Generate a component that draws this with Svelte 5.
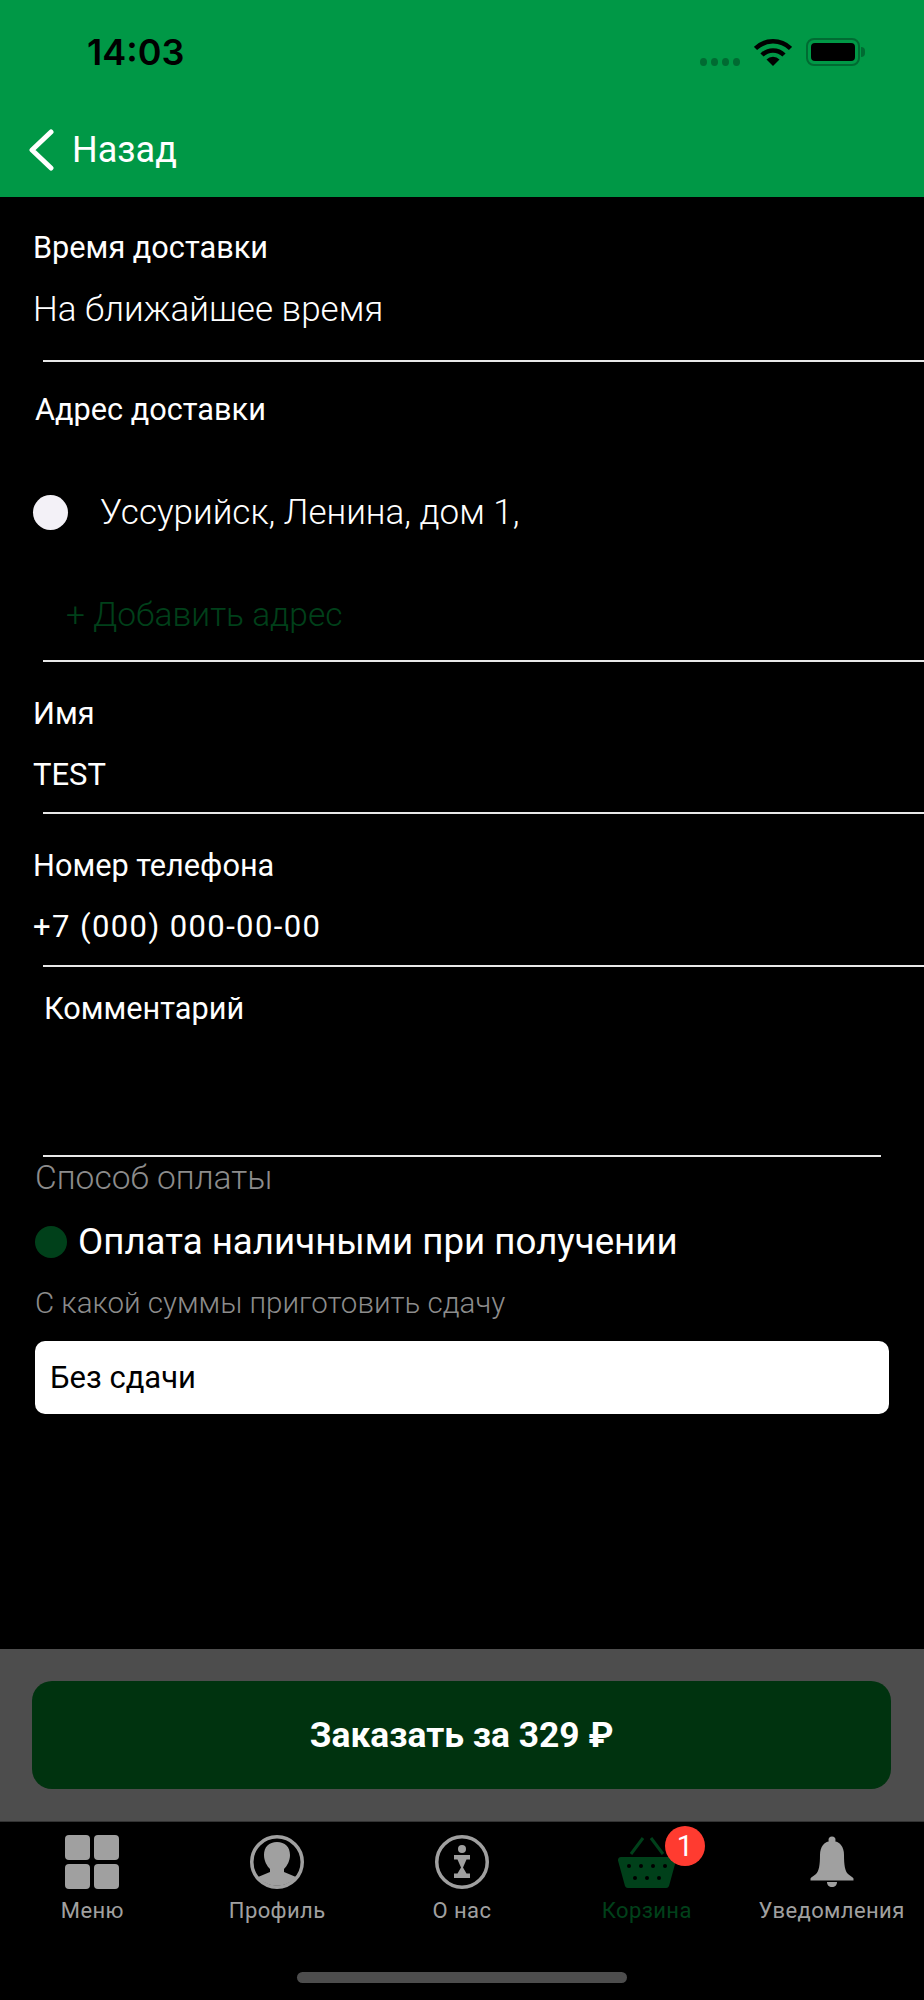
<script lang="ts">
  const fields = [
    { label: 'Имя', value: 'TEST', wide: false },
    { label: 'Номер телефона', value: '+7 (000) 000-00-00', wide: true },
  ];

  const tabs = [
    { id: 'menu', label: 'Меню' },
    { id: 'profile', label: 'Профиль' },
    { id: 'about', label: 'О нас' },
    { id: 'cart', label: 'Корзина', badge: 1 },
    { id: 'bell', label: 'Уведомления' },
  ];
  const holes = [[11, 31], [23, 31], [35, 31], [47, 31], [17, 43], [29, 43], [41, 43]];
</script>

<div class="page">
  <header class="top">
    <div class="status">
      <span class="time">14:03</span>
      <div class="status-icons">
        <span class="dots"><i></i><i></i><i></i><i></i></span>
        <svg class="wifi" viewBox="0 0 38 28" aria-hidden="true">
          <path d="M1.500 10.500a25 25 0 0 1 35 0" fill="none" stroke="#000" stroke-width="4.500"/>
          <path d="M8 17a15.500 15.500 0 0 1 22 0" fill="none" stroke="#000" stroke-width="4.500"/>
          <path d="M12.500 21.500a9 9 0 0 1 13 0L19 28z" fill="#000"/>
        </svg>
        <span class="battery"><span></span></span>
      </div>
    </div>
    <div class="back">
      <svg class="chevron" viewBox="0 0 26 42" aria-hidden="true">
        <path d="M23 3 4 21l19 18" fill="none" stroke="#fff" stroke-width="5" stroke-linecap="round" stroke-linejoin="round"/>
      </svg>
      <span>Назад</span>
    </div>
  </header>

  <main class="form">
    <section class="block first">
      <div class="label">Время доставки</div>
      <div class="value">На ближайшее время</div>
    </section>

    <section class="block address">
      <div class="label addr-label">Адрес доставки</div>
      <div class="addr-row">
        <span class="dot light"></span>
        <span class="addr-text">Уссурийск, Ленина, дом 1,</span>
      </div>
      <div class="add">+ Добавить адрес</div>
    </section>

    {#each fields as f}
      <section class="block field">
        <div class="label">{f.label}</div>
        <div class="value small" class:wide={f.wide}>{f.value}</div>
      </section>
    {/each}

    <section class="comment">
      <div class="label">Комментарий</div>
    </section>

    <section class="pay">
      <div class="muted big">Способ оплаты</div>
      <div class="pay-row">
        <span class="dot green"></span>
        <span>Оплата наличными при получении</span>
      </div>
      <div class="muted">С какой суммы приготовить сдачу</div>
      <div class="change">Без сдачи</div>
    </section>
  </main>

  <div class="order">
    <button class="order-btn">Заказать за 329 ₽</button>
  </div>

  <nav class="tabs">
    {#each tabs as t}
      <div class="tab" class:active={t.id === 'cart'}>
        <div class="tab-icon">
          {#if t.id === 'menu'}
            <svg viewBox="0 0 54 54" aria-hidden="true">
              <rect x="0" y="0" width="25" height="25" rx="4"/>
              <rect x="29" y="0" width="25" height="25" rx="4"/>
              <rect x="0" y="29" width="25" height="25" rx="4"/>
              <rect x="29" y="29" width="25" height="25" rx="4"/>
            </svg>
          {:else if t.id === 'profile'}
            <svg viewBox="0 0 54 54" aria-hidden="true">
              <circle cx="27" cy="27" r="25.250" fill="none" stroke="currentColor" stroke-width="3.500"/>
              <path d="M27 7c-8 0-13 5-13 13 0 6 3 11 6 14v3L8 42a25 25 0 0 0 38 0l-12-5v-3c3-3 6-8 6-14 0-8-5-13-13-13z"/>
            </svg>
          {:else if t.id === 'about'}
            <svg viewBox="0 0 54 54" aria-hidden="true">
              <circle cx="27" cy="27" r="25.250" fill="none" stroke="currentColor" stroke-width="3.500"/>
              <circle cx="27" cy="14" r="4"/>
              <path d="M19 20h16v4.500h-3.500L28 32.500l3.500 6H35V43H19v-4.500h3.500l3.500-6-3.500-8H19z"/>
            </svg>
          {:else if t.id === 'cart'}
            <svg class="basket" viewBox="0 0 58 54" aria-hidden="true">
              <path d="M13 19 25 3M45 19 33 3" fill="none" stroke="currentColor" stroke-width="3"/>
              <path d="M3 22h52a3 3 0 0 1 3 3.500l-7 25.500a3 3 0 0 1-3 2H10a3 3 0 0 1-3-2L0 25.500A3 3 0 0 1 3 22z"/>
              {#each holes as h}
                <circle cx={h[0]} cy={h[1]} r="2" fill="#000"/>
              {/each}
            </svg>
            <span class="badge">{t.badge}</span>
          {:else}
            <svg viewBox="0 0 54 54" aria-hidden="true">
              <circle cx="27" cy="5" r="3.500"/>
              <path d="M27 6c-8 0-12 6-12 14 0 10-1 16-4 19-2 2-5 3-5.500 4.500v2h43v-2C48 42 45 41 43 39c-3-3-4-9-4-19 0-8-4-14-12-14z"/>
              <path d="M22 47h10c0 3-2 5-5 5s-5-2-5-5z"/>
            </svg>
          {/if}
        </div>
        <span class="tab-label">{t.label}</span>
      </div>
    {/each}
  </nav>
  <div class="home"><span></span></div>
</div>

<style>
  :global(body) {
    margin: 0;
    background: #000;
  }

  .page {
    width: 924px;
    height: 2000px;
    display: flex;
    flex-direction: column;
    background: #000;
    color: #fff;
    font-family: Roboto, "Liberation Sans", sans-serif;
    overflow: hidden;
  }

  .top {
    height: 197px;
    flex-shrink: 0;
    background: #009846;
    box-sizing: border-box;
  }

  .status {
    height: 104px;
    display: flex;
    justify-content: space-between;
    align-items: center;
    padding: 0 64px 0 87px;
  }

  .time {
    font-family: Inter, "Liberation Sans", sans-serif;
    font-size: 36px;
    font-weight: 600;
    color: #000;
  }

  .status-icons {
    display: flex;
    align-items: center;
    gap: 14px;
  }

  .dots {
    display: flex;
    gap: 4px;
    margin-top: 20px;
  }

  .dots i {
    width: 7px;
    height: 8px;
    border-radius: 50%;
    background: #006b32;
  }

  .wifi {
    width: 38px;
    height: 28px;
  }

  .battery {
    width: 54px;
    height: 28px;
    box-sizing: border-box;
    border: 2px solid #006b32;
    border-radius: 8px;
    padding: 3px;
    display: flex;
    position: relative;
  }

  .battery::after {
    content: "";
    position: absolute;
    right: -7px;
    top: 7px;
    width: 4px;
    height: 10px;
    border-radius: 0 4px 4px 0;
    background: #006b32;
  }

  .battery span {
    flex: 1;
    background: #000;
    border-radius: 4px;
  }

  .back {
    display: flex;
    align-items: center;
    gap: 18px;
    padding-left: 28px;
    margin-top: 25px;
    font-size: 36px;
  }

  .chevron {
    width: 26px;
    height: 42px;
  }

  .form {
    flex: 1;
    font-weight: 300;
  }

  .label {
    font-size: 30.700px;
    font-weight: 400;
    line-height: 34px;
  }

  .value {
    font-size: 35px;
    line-height: 40px;
  }

  .value.small {
    font-size: 31px;
    font-weight: 400;
  }

  .value.wide {
    letter-spacing: 1.400px;
  }

  .block {
    padding-left: 33px;
    box-sizing: border-box;
    position: relative;
  }

  .block::after,
  .comment::after {
    content: "";
    position: absolute;
    left: 43px;
    right: 0;
    bottom: 0;
    height: 2px;
    background: #e8e8e8;
  }

  .first {
    height: 165px;
    padding-top: 34px;
  }

  .first .value {
    margin-top: 25px;
  }

  .address {
    height: 300px;
    padding-top: 31px;
  }

  .addr-label {
    margin-left: 2px;
  }

  .addr-row {
    display: flex;
    align-items: center;
    gap: 32px;
    margin-top: 65px;
    font-size: 35px;
  }

  .dot {
    width: 35px;
    height: 35px;
    border-radius: 50%;
    flex-shrink: 0;
  }

  .dot.light {
    background: #f3f1f7;
  }

  .add {
    margin: 62px 0 0 33px;
    font-size: 33.500px;
    line-height: 40px;
    color: #00401a;
  }

  .field {
    height: 152px;
    padding-top: 35px;
  }

  .field + .field {
    height: 153px;
  }

  .field .value {
    margin-top: 24px;
  }

  .comment {
    height: 190px;
    padding: 25px 0 0 44px;
    box-sizing: border-box;
    position: relative;
  }

  .comment::after {
    right: 43px;
  }

  .pay {
    padding: 4px 35px 0;
  }

  .muted {
    font-size: 29.500px;
    line-height: 34px;
    color: #8c8c8c;
  }

  .muted.big {
    font-size: 33.500px;
  }

  .pay-row {
    display: flex;
    align-items: center;
    gap: 11px;
    margin-top: 25px;
    font-size: 36.700px;
    font-weight: 400;
    line-height: 44px;
  }

  .dot.green {
    width: 32px;
    height: 32px;
    background: #00401a;
  }

  .pay-row + .muted {
    margin-top: 22px;
  }

  .change {
    height: 73px;
    margin-top: 21px;
    padding-left: 15px;
    display: flex;
    align-items: center;
    background: #fff;
    border-radius: 10px;
    color: #000;
    font-size: 31px;
    font-weight: 400;
  }

  .order {
    height: 172px;
    flex-shrink: 0;
    box-sizing: border-box;
    background: #4d4d4d;
    padding: 32px 33px 31px 32px;
  }

  .order-btn {
    display: block;
    width: 100%;
    height: 108px;
    border: none;
    border-radius: 20px;
    background: #00330f;
    color: #fff;
    font-family: inherit;
    font-size: 35.400px;
    font-weight: 700;
  }

  .tabs {
    display: grid;
    grid-template-columns: repeat(5, 1fr);
    flex-shrink: 0;
    padding-top: 13px;
    border-top: 1px solid #333;
  }

  .tab {
    display: flex;
    flex-direction: column;
    align-items: center;
    color: #a0a0a0;
  }

  .tab.active {
    color: #00401a;
  }

  .tab-icon {
    position: relative;
    width: 54px;
    height: 54px;
  }

  .tab-icon svg {
    display: block;
    width: 54px;
    height: 54px;
    fill: currentColor;
    overflow: visible;
  }

  .tab-icon svg.basket {
    width: 58px;
    margin-left: -2px;
  }

  .badge {
    position: absolute;
    left: 45px;
    top: -9px;
    width: 40px;
    height: 40px;
    border-radius: 50%;
    background: #ff3b30;
    color: #fff;
    font-size: 29px;
    line-height: 40px;
    text-align: center;
  }

  .tab-label {
    margin-top: 9px;
    font-size: 22px;
    line-height: 26px;
    letter-spacing: 0.400px;
    white-space: nowrap;
  }

  .home {
    height: 76px;
    flex-shrink: 0;
    display: flex;
    justify-content: center;
    padding-top: 48px;
    box-sizing: border-box;
  }

  .home span {
    width: 330px;
    height: 11px;
    border-radius: 6px;
    background: #4d4d4d;
  }
</style>
